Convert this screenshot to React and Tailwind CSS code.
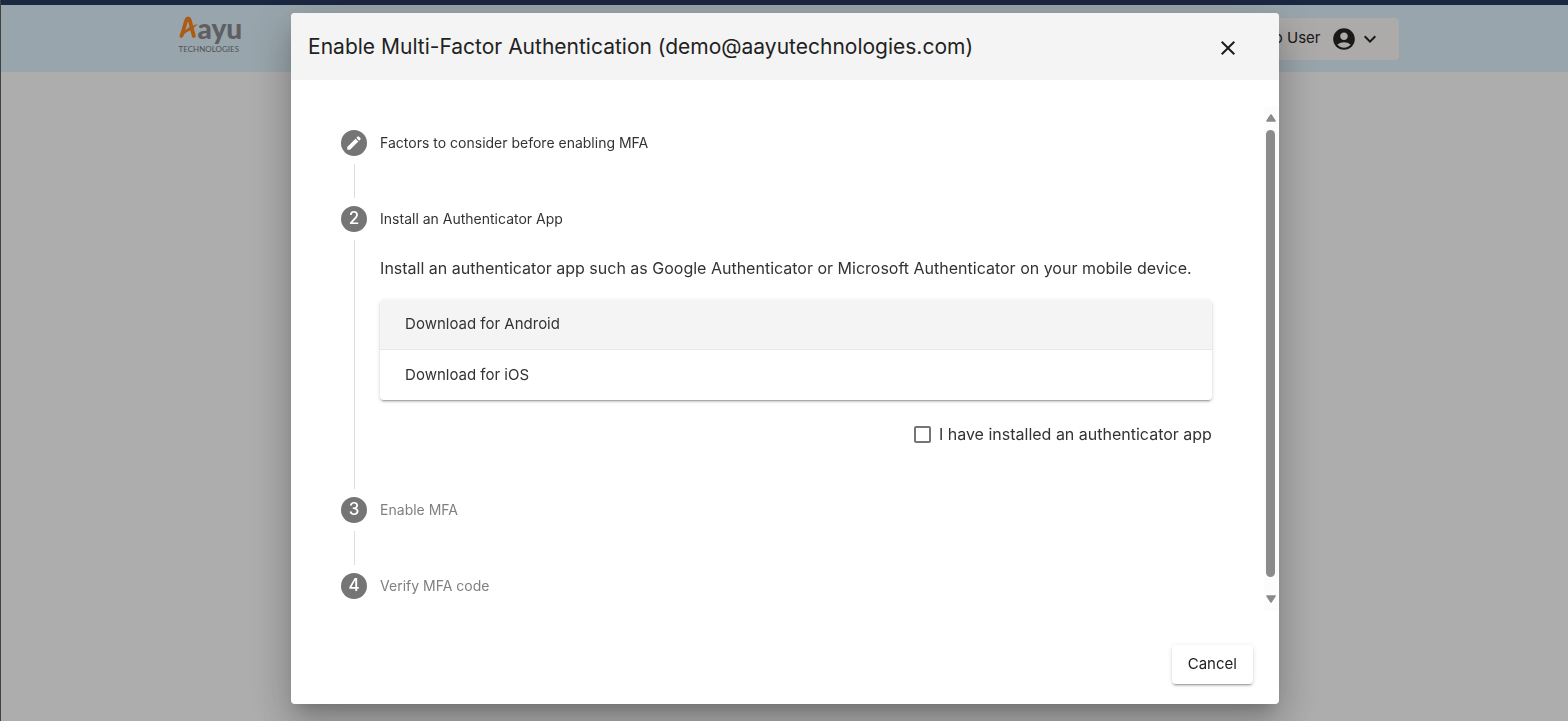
import React, { useState } from 'react'
import { MdAccountCircle, MdClose, MdExpandMore } from 'react-icons/md'

const downloads = [
  { label: 'Download for Android', href: '#android' },
  { label: 'Download for iOS', href: '#ios' },
];

function Logo() {
  return (
    <a href="#home" aria-label="Aayu Technologies" className="flex flex-col pl-2 pb-2 font-['Lato']">
      <span className="flex items-end">
        <svg viewBox="0 0 20 24" className="w-[19px] h-6" aria-hidden="true">
          <path
            d="M2.6 20 C5 15 6 8 7.8 3.6 C8.6 1.4 10.6 1.4 11.3 3.6 L15.6 20.4"
            fill="none"
            stroke="#ff861c"
            strokeWidth="4"
            strokeLinecap="round"
            strokeLinejoin="round"
          />
          <path d="M0.4 22 C4 15 10 10.5 20 7.5 C15.5 11.5 13.5 14.4 9 16 C6 17.2 5 19 3.4 22 Z" fill="#ff861c" />
        </svg>
        <span className="text-[28px] leading-6 font-black text-[#8c8d90]">ayu</span>
      </span>
      <span className="mt-1 text-[8px] leading-[10px] text-[#77797c]">TECHNOLOGIES</span>
    </a>
  )
}

function PencilIcon() {
  return (
    <svg viewBox="0 0 24 24" className="size-[18px]" fill="currentColor" aria-hidden="true">
      <path d="M3 17.25V21h3.75L17.81 9.94l-3.75-3.75L3 17.25zM20.71 7.04a1 1 0 0 0 0-1.41l-2.34-2.34a1 1 0 0 0-1.41 0l-1.83 1.83 3.75 3.75 1.83-1.83z" />
    </svg>
  )
}

function Step({ marker, label, muted, last, children }) {
  return (
    <li className="flex gap-[13px]">
      <div className="flex flex-col items-center">
        <span className="flex items-center justify-center size-[26px] rounded-full bg-[#757575] text-white text-[17px] font-medium">
          {marker}
        </span>
        {!last && <span className="flex-1 w-px min-h-[34px] my-2 bg-[#dddddd]" />}
      </div>
      <div className="flex-1 min-w-0">
        <h3 className={muted ? 'leading-[26px] text-[14px] text-[#808080]' : 'leading-[26px] text-[14px] text-[#333333]'}>
          {label}
        </h3>
        {children}
      </div>
    </li>
  )
}

function Scrollbar() {
  return (
    <div className="flex flex-col items-center w-[14px] mr-px py-2 bg-[#fcfcfc]" aria-hidden="true">
      <svg viewBox="0 0 10 8" className="w-[10px] h-2">
        <path d="M5 1 L9 7 H1 Z" fill="#8b8b8b" stroke="#8b8b8b" strokeWidth="1.6" strokeLinejoin="round" />
      </svg>
      <span className="flex-1 w-[9px] mt-2 mb-[18px] rounded-full bg-[#8b8b8b]" />
      <svg viewBox="0 0 10 8" className="w-[10px] h-2">
        <path d="M5 7 L9 1 H1 Z" fill="#8b8b8b" stroke="#8b8b8b" strokeWidth="1.6" strokeLinejoin="round" />
      </svg>
    </div>
  )
}

function MfaDialog() {
  const [installed, setInstalled] = useState(false);

  return (
    <div
      role="dialog"
      aria-labelledby="mfa-title"
      className="w-[63vw] bg-white rounded-sm overflow-hidden shadow-[0_11px_15px_-7px_rgba(0,0,0,0.2),0_24px_38px_3px_rgba(0,0,0,0.14),0_9px_46px_8px_rgba(0,0,0,0.12)]"
    >
      <div className="flex items-center justify-between h-[67px] pl-[17px] pr-[39px] bg-[#f4f4f4]">
        <h2 id="mfa-title" className="text-[21px] text-[#222222]">
          Enable Multi-Factor Authentication (demo@aayutechnologies.com)
        </h2>
        <button type="button" aria-label="Close" className="mt-0.5 text-[#1c1c1c]">
          <MdClose size={24} />
        </button>
      </div>

      <div className="flex mt-[26px]">
        <ol className="flex-1 pt-6 pb-3 pl-[50px] pr-[52px]">
          <Step marker={<PencilIcon />} label="Factors to consider before enabling MFA" />
          <Step marker="2" label="Install an Authenticator App">
            <p className="mt-6 text-base leading-6 text-[#333333]">
              Install an authenticator app such as Google Authenticator or Microsoft Authenticator on your mobile device.
            </p>
            <div className="mt-5 rounded-sm overflow-hidden divide-y divide-[#e8e8e8] shadow-[0_3px_1px_-2px_rgba(0,0,0,0.2),0_2px_2px_0_rgba(0,0,0,0.14),0_1px_5px_0_rgba(0,0,0,0.12)]">
              {downloads.map((item) => (
                <a
                  key={item.label}
                  href={item.href}
                  className="flex items-center h-[50px] px-[25px] text-[15px] text-[#333333] first:bg-[#f4f4f4]"
                >
                  {item.label}
                </a>
              ))}
            </div>
            <div className="flex items-center justify-end gap-2 mt-[22px] pb-[51px]">
              <input
                id="installed"
                type="checkbox"
                checked={installed}
                onChange={(e) => setInstalled(e.target.checked)}
                className="appearance-none size-[17px] border-2 border-[#757575] rounded-xs checked:bg-[#757575]"
              />
              <label htmlFor="installed" className="text-base leading-6 text-[#333333]">
                I have installed an authenticator app
              </label>
            </div>
          </Step>
          <Step marker="3" label="Enable MFA" muted />
          <Step marker="4" label="Verify MFA code" muted last />
        </ol>
        <Scrollbar />
      </div>

      <div className="flex justify-end pt-[34px] pb-5 pr-[26px]">
        <button
          type="button"
          className="h-[39px] px-4 rounded-sm bg-white text-[15px] text-[#222222] shadow-[0_3px_1px_-2px_rgba(0,0,0,0.2),0_2px_2px_0_rgba(0,0,0,0.14),0_1px_5px_0_rgba(0,0,0,0.12)]"
        >
          Cancel
        </button>
      </div>
    </div>
  )
}

function App() {
  return (
    <div className="min-h-screen bg-white border-l border-[#606060] font-['Inter',sans-serif]">
      <div className="h-[5px] bg-[#283b60]" />
      <header className="h-[67px] bg-[#e1f4fe]">
        <div className="flex items-center justify-between max-w-[1228px] h-full mx-auto">
          <Logo />
          <button type="button" className="flex items-center h-[42px] px-[17px] rounded-sm bg-[#fffcfb] text-[15px] text-[#262626]">
            Demo User
            <MdAccountCircle size={26} className="ml-[10px]" />
            <MdExpandMore size={24} className="ml-px" />
          </button>
        </div>
      </header>

      <div className="fixed inset-0 flex items-start justify-center pt-[13px] pl-0.5 bg-black/32">
        <MfaDialog />
      </div>
    </div>
  )
}


export default App;
